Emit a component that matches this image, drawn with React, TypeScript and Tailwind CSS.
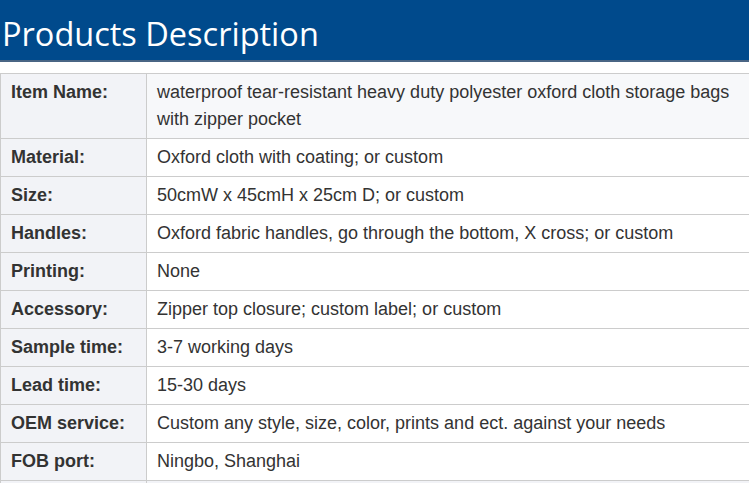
import React from "react";

const rows: [string, string][] = [
  ["Item Name:", "waterproof tear-resistant heavy duty polyester oxford cloth storage bags with zipper pocket"],
  ["Material:", "Oxford cloth with coating; or custom"],
  ["Size:", "50cmW x 45cmH x 25cm D; or custom"],
  ["Handles:", "Oxford fabric handles, go through the bottom, X cross; or custom"],
  ["Printing:", "None"],
  ["Accessory:", "Zipper top closure; custom label; or custom"],
  ["Sample time:", "3-7 working days"],
  ["Lead time:", "15-30 days"],
  ["OEM service:", "Custom any style, size, color, prints and ect. against your needs"],
  ["FOB port:", "Ningbo, Shanghai"],
];

export default function App() {
  return (
    <div className="h-[483px] w-full overflow-hidden bg-white">
      {/* Title bar */}
      <div className="h-[62px] bg-[#004a8c] border-b-2 border-[#4a6584] flex items-center">
        <h1
          className="pl-[2px] pt-[9px] text-[32.5px] leading-none text-white"
          style={{ fontFamily: '"Segoe UI", "Open Sans", sans-serif' }}
        >
          Products Description
        </h1>
      </div>

      {/* Spec table */}
      <table
        className="mt-[11px] w-[calc(100%+2px)] border-collapse text-[18px] leading-[27px] text-[#333]"
        style={{ fontFamily: '"Liberation Sans", Arial, sans-serif' }}
      >
        <tbody>
          {rows.map(([label, value], i) => (
            <tr key={label}>
              <th className="w-[146px] border border-[#ccc] bg-[#f2f3f7] px-[10px] py-[5px] text-left align-top font-bold">
                {label}
              </th>
              <td
                className={
                  "border border-[#ccc] px-[10px] py-[5px] align-top " +
                  (i === 0 ? "bg-[#f7f8fa]" : "bg-white")
                }
              >
                {value}
              </td>
            </tr>
          ))}
          <tr>
            <th className="h-[38px] border border-[#ccc] bg-[#f2f3f7]"></th>
            <td className="border border-[#ccc] bg-[#f2f3f7]"></td>
          </tr>
        </tbody>
      </table>
    </div>
  );
}
